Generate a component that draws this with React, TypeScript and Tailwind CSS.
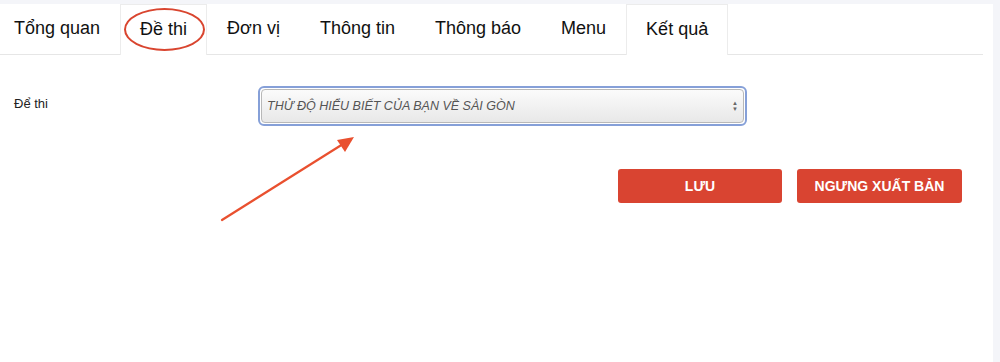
const tabs = ["Tổng quan", "Đề thi", "Đơn vị", "Thông tin", "Thông báo", "Menu", "Kết quả"];

const ArrowMark = () => (
  <svg className="absolute left-[215px] top-[125px]" width="150" height="100" viewBox="0 0 150 100">
    <line x1="7" y1="91" x2="128" y2="15" stroke="#e9502f" strokeWidth="2.2" strokeLinecap="round" />
    <polygon points="139,8 122,11 130,23" fill="#e9502f" />
  </svg>
);

export default function App() {
  return (
    <div
      className="min-h-[362px] bg-[#f4f5f9] pt-[4px] pr-[7px]"
      style={{ fontFamily: '"Liberation Sans", Arial, sans-serif' }}
    >
      <div className="relative h-[358px] bg-white">
        <div className="mr-[10px] flex h-[51px] border-b border-[#e6e6e6]">
          {tabs.map((t, i) => {
            const boxed = t === "Đề thi" || t === "Kết quả";
            return (
              <div
                key={t}
                className={
                  "relative -mb-px flex items-center pb-[2px] text-[18px] text-[#111] " +
                  (i === 0 ? "pl-[13px] pr-[19px] " : "px-[19px] ") +
                  (boxed ? "border border-b-0 border-[#ececec] bg-white" : "border border-transparent")
                }
              >
                {t}
                {t === "Đề thi" && (
                  <span className="absolute left-[3px] top-[3px] h-[43px] w-[81px] rounded-[50%] border-2 border-[#d9452f]" />
                )}
              </div>
            );
          })}
        </div>

        <div className="flex items-center pl-[14px] pt-[31px]">
          <div className="w-[244px] text-[13px] font-medium text-[#222] -mt-[5px]">Để thi</div>
          <div className="flex h-[40px] w-[489px] items-center rounded-[6px] border-[2.5px] border-[#86a0d8] p-px">
            <div className="flex h-full w-full items-center justify-between rounded-[4px] border border-[#b8b8b8] bg-gradient-to-b from-[#fbfbfb] to-[#e8e8e8] pl-[5px] pr-[5px]">
              <span className="text-[12.5px] italic text-[#555]">THỬ ĐỘ HIỂU BIẾT CỦA BẠN VỀ SÀI GÒN</span>
              <span className="flex flex-col items-center leading-none text-[#666]">
                <span className="text-[6px]">▲</span>
                <span className="text-[6px]">▼</span>
              </span>
            </div>
          </div>
        </div>

        <div className="mr-[31px] mt-[43px] flex justify-end gap-[15px]">
          <button className="h-[34px] w-[164px] rounded-[3px] bg-[#d94431] text-[14px] font-bold text-white">
            LƯU
          </button>
          <button className="h-[34px] w-[165px] rounded-[3px] bg-[#d94431] text-[14px] font-bold text-white">
            NGƯNG XUẤT BẢN
          </button>
        </div>

        <ArrowMark />
      </div>
    </div>
  );
}
